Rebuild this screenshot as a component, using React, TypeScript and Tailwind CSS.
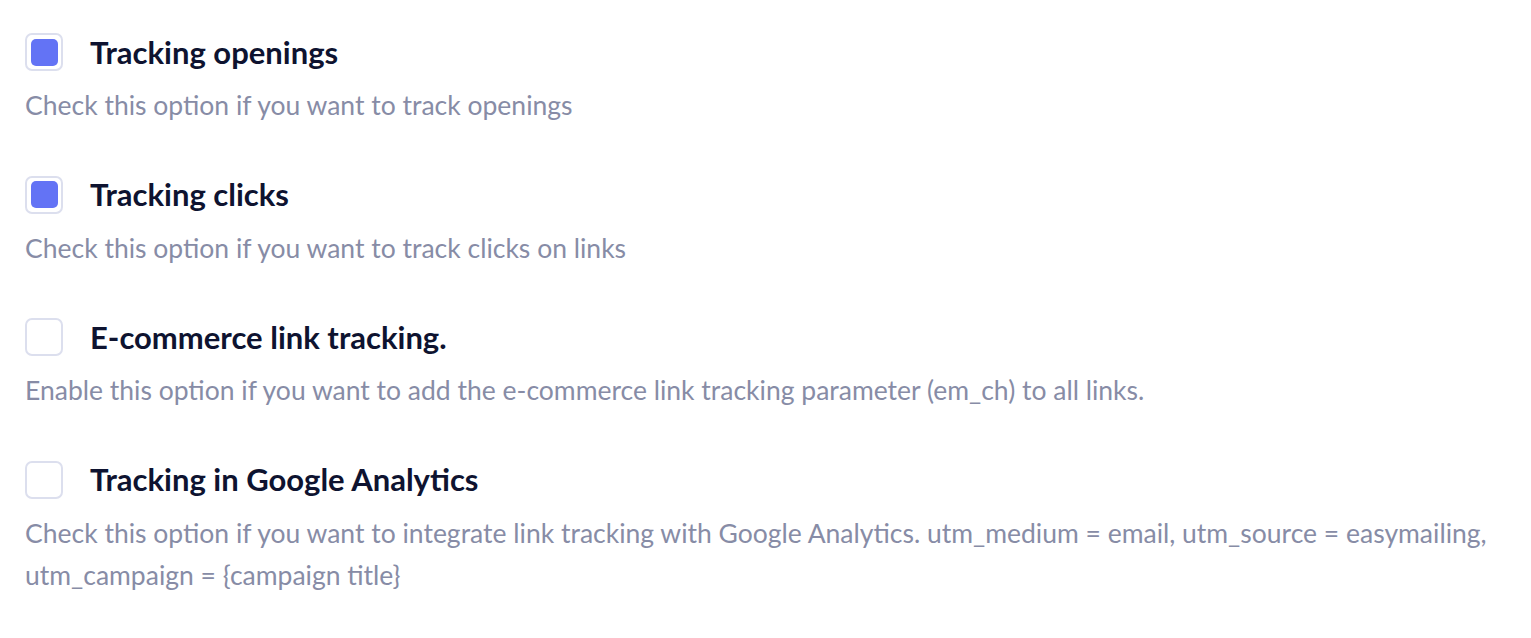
import React from "react";

const items = [
  { title: "Tracking openings", desc: "Check this option if you want to track openings", checked: true },
  { title: "Tracking clicks", desc: "Check this option if you want to track clicks on links", checked: true },
  { title: "E-commerce link tracking.", desc: "Enable this option if you want to add the e-commerce link tracking parameter (em_ch) to all links.", checked: false },
  {
    title: "Tracking in Google Analytics",
    desc: "Check this option if you want to integrate link tracking with Google Analytics. utm_medium = email, utm_source = easymailing, utm_campaign = {campaign title}",
    checked: false,
  },
];

export default function App() {
  return (
    <div className="w-[1531px] h-[638px] bg-white pl-[25px] pt-[33px]" style={{ fontFamily: "Lato, sans-serif" }}>
      <div className="flex flex-col gap-[49.5px] w-[1490px]">
        {items.map((it) => (
          <div key={it.title} className="flex flex-col">
            <div className="flex items-center gap-[27px] h-[38px]">
              <div className="w-[38px] h-[38px] rounded-[7px] border-2 border-[#dcdfee] bg-white flex items-center justify-center shrink-0">
                {it.checked && <div className="w-[27px] h-[27px] rounded-[5px] bg-[#6373f5]" />}
              </div>
              <div className="text-[31px] font-bold text-[#0e1330] leading-none">{it.title}</div>
            </div>
            <div className="mt-[13px] text-[26.5px] leading-[42px] text-[#878ca6]">{it.desc}</div>
          </div>
        ))}
      </div>
    </div>
  );
}
